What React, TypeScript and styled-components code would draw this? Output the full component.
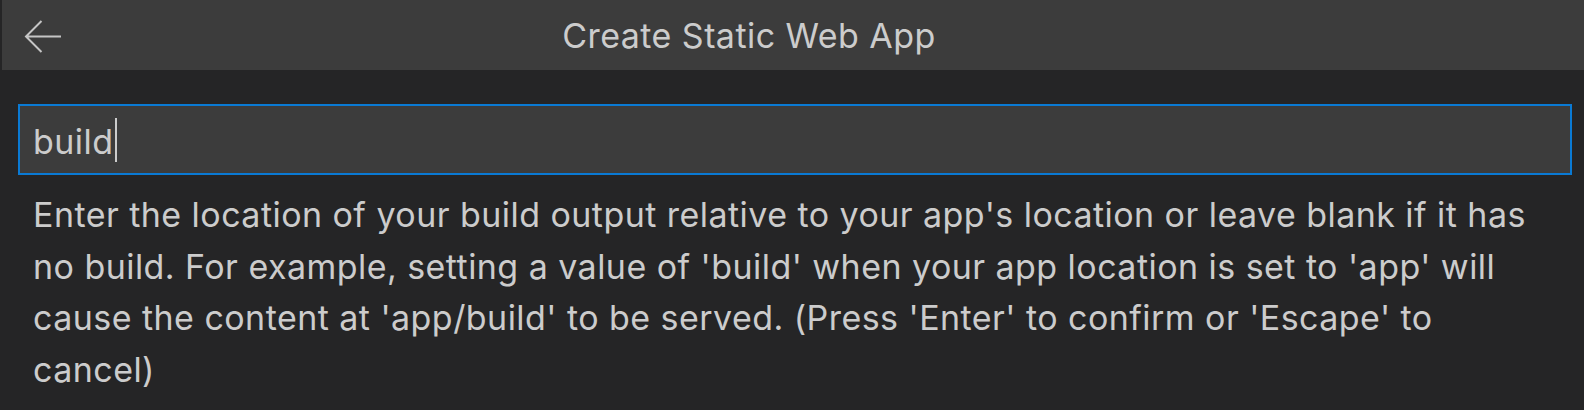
import React from "react";
import styled, { createGlobalStyle } from "styled-components";

const GlobalStyle = createGlobalStyle`
  html, body {
    margin: 0;
    padding: 0;
    background: #252526;
  }
  body {
    font-family: Inter, "Open Sans", sans-serif;
    -webkit-font-smoothing: antialiased;
  }
`;

const Panel = styled.div`
  width: 1584px;
  height: 410px;
  background: #252526;
  overflow: hidden;
`;

const TitleBar = styled.header`
  margin-left: 2px;
  height: 70px;
  background: #3c3c3c;
  display: flex;
  align-items: center;
`;

const BackButton = styled.div`
  width: 68px;
  height: 70px;
  display: flex;
  align-items: center;
  padding: 4px 0 0 22px;
  box-sizing: border-box;
`;

const Title = styled.div`
  flex: 1;
  text-align: center;
  font-size: 34px;
  letter-spacing: 0.45px;
  color: #cccccc;
  padding-right: 156px;
`;

const Body = styled.div`
  padding: 34px 12px 0 18px;
`;

const InputBox = styled.div`
  border: 2px solid #0a7ad4;
  background: #3c3c3c;
  display: flex;
  align-items: center;
  padding: 4px 0 0 13px;
  box-sizing: content-box;
  height: 63px;
  font-size: 34px;
  letter-spacing: 0.45px;
  color: #cccccc;
`;

const Caret = styled.span`
  width: 1.5px;
  height: 44px;
  margin: 0 0 4px 2px;
  background: #cccccc;
`;

const Description = styled.div`
  padding: 14px 32px 0 15px;
  font-size: 34px;
  letter-spacing: 0.45px;
  line-height: 51.7px;
  color: #cccccc;
`;

function BackArrow() {
  return (
    <svg width="38" height="34" viewBox="0 0 38 34" fill="none">
      <path
        d="M2 16.5 H37 M17.5 1 L2 16.5 L17.5 32"
        stroke="#c5c5c5"
        strokeWidth="2"
        strokeLinecap="butt"
        strokeLinejoin="miter"
      />
    </svg>
  );
}

export default function App() {
  return (
    <Panel>
      <GlobalStyle />
      <TitleBar>
        <BackButton>
          <BackArrow />
        </BackButton>
        <Title>Create Static Web App</Title>
      </TitleBar>
      <Body>
        <InputBox>
          <span>build</span>
          <Caret />
        </InputBox>
        <Description>
          Enter the location of your build output relative to your app's location or leave blank if it has no build. For example, setting a value of 'build' when your app location is set to 'app' will cause the content at 'app/build' to be served. (Press 'Enter' to confirm or 'Escape' to cancel)
        </Description>
      </Body>
    </Panel>
  );
}
